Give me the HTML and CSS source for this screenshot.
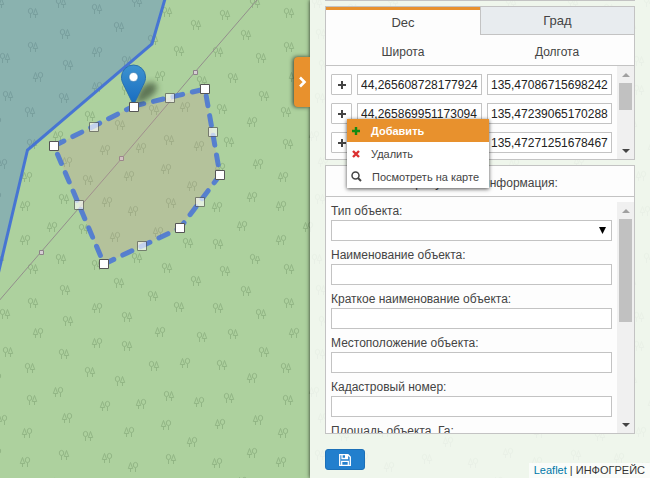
FILE: index.html
```html
<!DOCTYPE html>
<html lang="ru">
<head>
<meta charset="utf-8">
<title>ИНФОГРЕЙС</title>
<link rel="stylesheet" href="styles.css">
</head>
<body>
<svg class="map" aria-hidden="true">
  <defs>
    <g id="a"><ellipse cx="-2.500" cy="-2" rx="2.200" ry="2.600"/><path d="M-2.500 .6V5M2.500 -4.500L.3 1.500H4.700ZM2.500 1.500V5"/></g>
    <g id="b"><ellipse cx="2.500" cy="-2" rx="2.200" ry="2.600"/><path d="M2.500 .6V5M-2.500 -4.500L-4.700 1.500H-.3ZM-2.500 1.500V5"/></g>
    <pattern id="forest" width="256" height="256" patternUnits="userSpaceOnUse">
      <rect width="256" height="256" fill="#add19e"/>
      <g fill="none" stroke="#92b685" stroke-width="1">
        <use href="#a" x="33" y="13"/><use href="#a" x="61" y="3"/><use href="#a" x="61" y="259"/><use href="#a" x="97" y="9"/><use href="#a" x="137" y="2"/><use href="#a" x="137" y="258"/>
        <use href="#a" x="65" y="34"/><use href="#a" x="119" y="27"/><use href="#a" x="33" y="47"/><use href="#b" x="97" y="52"/><use href="#a" x="5" y="58"/><use href="#a" x="68" y="65"/><use href="#a" x="127" y="61"/>
        <use href="#b" x="38" y="77"/><use href="#a" x="8" y="96"/><use href="#a" x="64" y="98"/><use href="#b" x="97" y="87"/><use href="#a" x="30" y="112"/><use href="#a" x="90" y="116"/><use href="#a" x="127" y="90"/>
        <use href="#b" x="58" y="136"/><use href="#a" x="120" y="125"/><use href="#b" x="105" y="150"/><use href="#b" x="141" y="148"/><use href="#a" x="154" y="110"/><use href="#a" x="32" y="144"/><use href="#a" x="153" y="40"/>
        <use href="#b" x="160" y="76"/><use href="#b" x="67" y="162"/><use href="#a" x="167" y="12"/><use href="#a" x="225" y="15"/><use href="#a" x="196" y="25"/><use href="#a" x="246" y="35"/><use href="#a" x="179" y="51"/>
        <use href="#a" x="218" y="52"/><use href="#a" x="255" y="3"/><use href="#a" x="-1" y="3"/><use href="#a" x="255" y="259"/><use href="#a" x="202" y="81"/><use href="#a" x="233" y="78"/><use href="#b" x="185" y="107"/>
        <use href="#a" x="222" y="109"/><use href="#b" x="252" y="122"/><use href="#b" x="-4" y="122"/><use href="#a" x="169" y="140"/><use href="#b" x="199" y="146"/><use href="#a" x="229" y="142"/>
        <use href="#b" x="27" y="177"/><use href="#a" x="88" y="180"/><use href="#b" x="129" y="176"/><use href="#b" x="2" y="164"/><use href="#b" x="258" y="164"/><use href="#a" x="64" y="199"/><use href="#b" x="107" y="202"/>
        <use href="#b" x="25" y="206"/><use href="#b" x="133" y="211"/><use href="#b" x="52" y="227"/><use href="#a" x="84" y="229"/><use href="#b" x="115" y="237"/><use href="#b" x="25" y="240"/><use href="#b" x="158" y="232"/>
        <use href="#b" x="166" y="169"/><use href="#b" x="192" y="186"/><use href="#a" x="171" y="203"/><use href="#b" x="220" y="168"/><use href="#b" x="252" y="197"/><use href="#b" x="-4" y="197"/><use href="#b" x="217" y="207"/>
        <use href="#b" x="242" y="226"/><use href="#a" x="188" y="243"/><use href="#a" x="218" y="244"/>
      </g>
    </pattern>
    <linearGradient id="pin" x2="0" y2="1"><stop offset="0" stop-color="#3d93d0"/><stop offset="1" stop-color="#176bc0"/></linearGradient>
    <filter id="soft" x="-40%" y="-40%" width="180%" height="180%"><feGaussianBlur stdDeviation="3"/></filter>
  </defs>
  <rect width="100%" height="100%" fill="url(#forest)"/>
  <path d="M-2 302L41 252L122 158L195 72L257 0" fill="none" stroke="#938e8c"/>
  <g fill="#d6cfd4" stroke="#8c8289"><path d="M39.500 250.500h4v4h-4zM119.500 156.500h4v4h-4zM193.500 70.500h4v4h-4z"/></g>
  <path d="M-8 -8V300L27.500 150L152 44L167 -8Z" fill="#3c6ad6" fill-opacity=".3" stroke="#416fd6" stroke-opacity=".93" stroke-width="3"/>
  <path d="M134 106L205 89L220 175L180 228L104 264L54 146Z" fill="#cd9992" fill-opacity=".25" stroke="#426fd9" stroke-opacity=".82" stroke-width="5" stroke-linecap="round" stroke-linejoin="round" stroke-dasharray="10 10"/>
  <path d="M135 105C137 91 145 80 154 83C162 87 154 98 135 105Z" fill="#273522" opacity=".6" filter="url(#soft)"/>
  <path d="M133.500 105L124 85.500C121.500 81 121.500 79 121.500 77A12 12 0 0 1 145.500 77C145.500 79 145.500 81 143 85.500Z" fill="url(#pin)" stroke="#2c71ac"/>
  <circle cx="133.500" cy="77" r="4.500" fill="#fff" stroke="#2d72aa" stroke-width=".6"/>
  <g fill="#fff" stroke="#555" opacity=".65"><path d="M165.500 93.500h9v9h-9zM208.500 127.500h9v9h-9zM195.500 197.500h9v9h-9zM137.500 241.500h9v9h-9zM74.500 200.500h9v9h-9zM89.500 122.500h9v9h-9z"/></g>
  <g fill="#fff" stroke="#555"><path d="M129.500 102.500h9v9h-9zM200.500 84.500h9v9h-9zM215.500 170.500h9v9h-9zM175.500 223.500h9v9h-9zM99.500 259.500h9v9h-9zM49.500 141.500h9v9h-9z"/></g>
</svg>

<aside class="panel">
  <button class="toggle" type="button" aria-label="Свернуть панель"><svg width="9" height="12" viewBox="0 0 9 12"><path d="M2 1.500L6.500 6L2 10.500" fill="none" stroke="#fff" stroke-width="2.600"/></svg></button>
  <div class="previous"></div>

  <section class="box coords">
    <div class="tabs">
      <button class="tab active" type="button">Dec</button>
      <button class="tab" type="button">Град</button>
    </div>
    <div class="heads"><span>Широта</span><span>Долгота</span></div>
    <div class="scroller">
      <div class="rows">
        <div class="row">
          <button class="plus" type="button" aria-label="Действия с точкой 1"><svg width="8" height="8"><path d="M4 0V8M0 4H8" stroke="currentColor" stroke-width="2"/></svg></button>
          <input aria-label="Широта 1" value="44,265608728177924"><input aria-label="Долгота 1" value="135,47086715698242">
        </div>
        <div class="row">
          <button class="plus" type="button" aria-label="Действия с точкой 2"><svg width="8" height="8"><path d="M4 0V8M0 4H8" stroke="currentColor" stroke-width="2"/></svg></button>
          <input aria-label="Широта 2" value="44,265869951173094"><input aria-label="Долгота 2" value="135,47239065170288">
        </div>
        <div class="row">
          <button class="plus" type="button" aria-label="Действия с точкой 3"><svg width="8" height="8"><path d="M4 0V8M0 4H8" stroke="currentColor" stroke-width="2"/></svg></button>
          <input aria-label="Широта 3"><input aria-label="Долгота 3" value="135,47271251678467">
        </div>
      </div>
      <div class="bar" aria-hidden="true"><i class="up"></i><i class="thumb short"></i><i class="down"></i></div>
    </div>
    <div class="menu" role="menu">
      <button class="item selected" type="button" role="menuitem"><svg width="10" height="10"><path d="M5 1V9M1 5H9" stroke="#128a12" stroke-width="2.400"/></svg>Добавить</button>
      <button class="item" type="button" role="menuitem"><svg width="10" height="10"><path d="M2 2L8 8M8 2L2 8" stroke="#dc3030" stroke-width="2.400"/></svg>Удалить</button>
      <button class="item" type="button" role="menuitem"><svg width="11" height="11"><circle cx="4.500" cy="4.500" r="3.500" fill="none" stroke="#444" stroke-width="1.500"/><path d="M7 7L10 10" stroke="#444" stroke-width="2"/></svg>Посмотреть на карте</button>
    </div>
  </section>

  <section class="box info">
    <h2>Атрибутивная информация:</h2>
    <div class="scroller">
      <div class="fields">
        <label for="type">Тип объекта:</label>
        <div class="choice"><select id="type"><option></option></select><svg width="7" height="7"><path d="M0 0H7L3.500 7Z"/></svg></div>
        <label for="name">Наименование объекта:</label><input id="name">
        <label for="short">Краткое наименование объекта:</label><input id="short">
        <label for="place">Местоположение объекта:</label><input id="place">
        <label for="number">Кадастровый номер:</label><input id="number">
        <label for="area">Площадь объекта, Га:</label><input id="area">
      </div>
      <div class="bar" aria-hidden="true"><i class="up"></i><i class="thumb"></i><i class="down"></i></div>
    </div>
  </section>

  <button class="save" type="button" aria-label="Сохранить"><svg width="12" height="12" viewBox="0 0 12 12"><path d="M.7 .7H9L11.300 3V11.300H.7ZM3 .7V4.500H8.500V.7M2.700 11V7.300H9.300V11" fill="none" stroke="#fff" stroke-width="1.300"/><path d="M6 1H8V4H6Z" fill="#fff"/></svg></button>
</aside>
<footer class="credit"><a href="#">Leaflet</a> | ИНФОГРЕЙС</footer>
</body>
</html>
```
FILE: styles.css
```css
* { box-sizing: border-box; }

body {
  margin: 0;
  min-height: 100vh;
  display: flex;
  justify-content: flex-end;
  overflow: hidden;
  position: relative;
  font: 12px/18px "Liberation Sans", Arial, sans-serif;
  color: #444;
}

button, input, select { font: inherit; color: inherit; margin: 0; }
button { padding: 0; cursor: pointer; }

.map {
  position: absolute;
  inset: 0;
  width: 100%;
  height: 100%;
}

.panel {
  position: relative;
  width: 340px;
  padding: 0 15px;
  background: rgba(255, 255, 255, .8);
  box-shadow: 0 0 4px rgba(0, 0, 0, .8);
}

.toggle {
  position: absolute;
  left: -16px;
  top: 57px;
  width: 16px;
  height: 50px;
  display: grid;
  place-items: center;
  border: 0;
  border-radius: 4px 0 0 4px;
  background: #e8912d;
  box-shadow: -1px 0 4px rgba(0, 0, 0, .7);
  clip-path: inset(-6px 0 -6px -6px);
}

.previous { border-bottom: 1px solid #c3c3c3; margin-bottom: 5px; }

.box {
  position: relative;
  border: 1px solid #c3c3c3;
  background: #fdfdfd;
  margin-bottom: 5px;
}

.tabs, .heads { display: grid; grid-template-columns: 1fr 1fr; text-align: center; }

.tab {
  height: 28px;
  border: solid #c3c3c3;
  border-width: 0 0 1px 1px;
  background: #e8ecef;
  font-size: 13px;
}

.tab.active {
  border: 0;
  border-top: 3px solid #e8912d;
  background: #fdfdfd;
}

.heads { height: 31px; line-height: 34px; border-bottom: 1px solid #c3c3c3; }

.scroller { display: flex; overflow: hidden; }
.coords .scroller { height: 93px; }
.info .scroller { height: 236px; padding-top: 5px; }

.rows {
  flex: 1;
  display: flex;
  flex-direction: column;
  gap: 8px;
  padding: 8px 5px;
}

.row { display: grid; grid-template-columns: 21px 1fr 1fr; gap: 5px; }

input, select {
  width: 100%;
  min-width: 0;
  height: 21px;
  padding: 0 3px;
  border: 1px solid #c3c3c3;
  border-radius: 0;
  background: #fff;
  color: #222;
}

select { appearance: none; display: block; }

.plus {
  height: 21px;
  display: grid;
  place-items: center;
  border: 1px solid #c3c3c3;
  border-radius: 1px;
  background: #fff;
}

.bar {
  width: 17px;
  display: flex;
  flex-direction: column;
  align-items: center;
  background: #f0f0f0;
}

.up, .down { border: 4px solid transparent; }
.up { border-top: 0; border-bottom-color: #a0a0a0; margin: 7px 0 6px; }
.down { border-bottom: 0; border-top-color: #444; margin: auto 0 6px; }
.thumb { width: 13px; height: 103px; background: #c1c1c1; }
.thumb.short { height: 27px; }

h2 {
  margin: 0;
  height: 31px;
  line-height: 34px;
  border-bottom: 1px solid #c3c3c3;
  font-size: 12px;
  font-weight: normal;
  text-align: center;
}

.fields { flex: 1; padding: 0 5px; }
.fields label { display: block; }
.fields input, .choice { display: block; margin-bottom: 5px; }
.choice { position: relative; }
.choice svg { position: absolute; right: 6px; top: 7px; pointer-events: none; }

.menu {
  position: absolute;
  left: 21px;
  top: 112px;
  z-index: 1;
  width: 142px;
  background: #fff;
  box-shadow: 0 1px 4px rgba(0, 0, 0, .7);
}

.item {
  width: 100%;
  height: 23px;
  display: flex;
  align-items: center;
  gap: 10px;
  padding: 0 4px;
  border: 0;
  background: none;
  font-size: 11px;
  white-space: nowrap;
}

.selected { background: #e8912d; color: #fff; font-weight: bold; }

.save {
  width: 40px;
  height: 21px;
  margin-top: 15px;
  display: grid;
  place-items: center;
  border: 1px solid #1c70b8;
  border-radius: 3px;
  background: #227fcd;
}

.info { margin-bottom: 0; }

.credit {
  position: absolute;
  right: 0;
  bottom: 0;
  padding: 0 5px;
  background: rgba(255, 255, 255, .7);
  font-size: 11px;
  line-height: 15px;
  color: #333;
}

.credit a { color: #0078a8; text-decoration: none; }
```
